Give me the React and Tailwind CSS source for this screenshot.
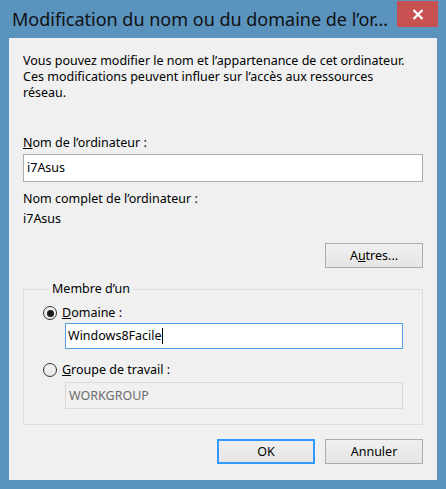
import React from 'react';

const font = { fontFamily: '"Noto Sans", "Open Sans", sans-serif' };

// Windows 8 style radio button
const Radio = ({ checked }) => (
  <span className="w-[14px] h-[14px] rounded-full border border-[#333333] bg-gradient-to-b from-[#f4f4f4] to-[#e6e6e6] flex items-center justify-center shrink-0">
    {checked && <span className="w-[7px] h-[7px] rounded-full bg-[#1a1a1a]" />}
  </span>
);

const Button = ({ children, focused }) => (
  <button
    className={`w-[98px] h-[25px] text-[12.5px] text-black bg-gradient-to-b from-[#f0f0f0] to-[#e5e5e5] border ${
      focused ? 'border-[#3399ff] shadow-[inset_0_0_0_1px_#3399ff]' : 'border-[#acacac]'
    }`}
  >
    {children}
  </button>
);

export default function App() {
  return (
    <div className="w-[446px] h-[489px] bg-[#5a93be] flex flex-col text-black" style={font}>
      {/* Title bar */}
      <div className="h-[38px] flex items-start justify-between">
        <div className="pl-[12px] pt-[6px] text-[18px] leading-[26px] text-[#111111] whitespace-nowrap overflow-hidden">
          Modification du nom ou du domaine de l’or…
        </div>
        <div className="mt-[1px] mr-[8px] w-[41px] h-[26px] bg-[#c75050] flex items-center justify-center shrink-0">
          <svg width="12" height="11" viewBox="0 0 12 11">
            <path d="M1.5 1 L10.5 10 M10.5 1 L1.5 10" stroke="white" strokeWidth="2.2" />
          </svg>
        </div>
      </div>

      {/* Client area */}
      <div className="flex-1 mx-[9px] mb-[9px] bg-[#f0f0f0] px-[14px] pt-[15px] pb-[16px] flex flex-col text-[12.5px] leading-[16px]">
        <p>
          Vous pouvez modifier le nom et l’appartenance de cet ordinateur.
          <br />
          Ces modifications peuvent influer sur l’accès aux ressources
          <br />
          réseau.
        </p>

        <div className="mt-[34px]">
          <u>N</u>om de l’ordinateur :
        </div>
        <div className="mt-[3px] h-[28px] bg-white border border-[#abadb3] flex items-center pl-[3px]">
          i7Asus
        </div>

        <div className="mt-[9px]">Nom complet de l’ordinateur :</div>
        <div className="mt-[4px]">i7Asus</div>

        <div className="mt-[16px] flex justify-end">
          <Button>
            A<u>u</u>tres...
          </Button>
        </div>

        <fieldset className="mt-[13px] border border-[#dcdcdc] pl-[19px] pr-[19px] pb-[15px]">
          <legend className="ml-[6px] px-[3px]">Membre d’un</legend>

          <div className="mt-[8px] flex items-center gap-[5px]">
            <Radio checked />
            <span>
              <u>D</u>omaine :
            </span>
          </div>
          <div className="mt-[2px] ml-[22px] h-[26px] bg-white border border-[#569de5] flex items-center pl-[2px]">
            Windows8Facile
            <span className="w-px h-[16px] bg-black" />
          </div>

          <div className="mt-[13px] flex items-center gap-[5px]">
            <Radio />
            <span>
              <u>G</u>roupe de travail :
            </span>
          </div>
          <div className="mt-[4px] ml-[22px] h-[27px] bg-[#f0f0f0] border border-[#d9d9d9] flex items-center pl-[3px] text-[#6d6d6d]">
            WORKGROUP
          </div>
        </fieldset>

        <div className="mt-[14px] flex justify-end gap-[10px]">
          <Button focused>OK</Button>
          <Button>Annuler</Button>
        </div>
      </div>
    </div>
  );
}
